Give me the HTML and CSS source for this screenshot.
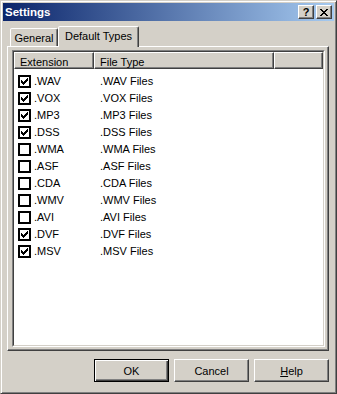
FILE: index.html
```html
<!DOCTYPE html>
<html lang="en">
<head>
  <meta charset="UTF-8">
  <title>Settings</title>
  <link rel="stylesheet" href="styles.css">
</head>
<body>
  <div class="window">
    <div class="titlebar">
      <span class="title">Settings</span>
      <div class="title-buttons">
        <button class="tbtn help-btn">?</button>
        <button class="tbtn">
          <svg width="8" height="7" viewBox="0 0 8 7" shape-rendering="crispEdges">
            <path d="M0 0h2v1H0z M6 0h2v1H6z M1 1h2v1H1z M5 1h2v1H5z M2 2h4v1H2z M3 3h2v1H3z M2 4h4v1H2z M1 5h2v1H1z M5 5h2v1H5z M0 6h2v1H0z M6 6h2v1H6z" fill="#000"/>
          </svg>
        </button>
      </div>
    </div>
    <div class="client">
      <div class="tabs">
        <div class="tab">General</div>
        <div class="tab active">Default Types</div>
      </div>
      <div class="panel">
        <div class="list">
          <div class="list-inner">
            <div class="header">
              <div class="col col-ext">Extension</div>
              <div class="col col-type">File Type</div>
              <div class="col col-rest"></div>
            </div>
            <div class="rows" id="rows"></div>
          </div>
        </div>
      </div>
      <div class="buttons">
        <button class="btn default">OK</button>
        <button class="btn">Cancel</button>
        <button class="btn"><u>H</u>elp</button>
      </div>
    </div>
  </div>

  <script>
    const types = [
      ["WAV", true], ["VOX", true], ["MP3", true], ["DSS", true],
      ["WMA", false], ["ASF", false], ["CDA", false], ["WMV", false],
      ["AVI", false], ["DVF", true], ["MSV", true]
    ];
    const check = '<svg width="7" height="7" viewBox="0 0 7 7" shape-rendering="crispEdges"><path d="M6 0h1v1H6z M5 1h2v1H5z M0 2h1v1H0z M4 2h3v1H4z M0 3h2v1H0z M3 3h3v1H3z M0 4h5v1H0z M1 5h3v1H1z M2 6h1v1H2z" fill="#000"/></svg>';
    const rowsEl = document.getElementById("rows");

    types.forEach(([ext, on]) => {
      rowsEl.innerHTML += `<div class="row">
        <div class="cell cell-ext"><span class="box">${on ? check : ""}</span>.${ext}</div>
        <div class="cell cell-type">.${ext} Files</div>
      </div>`;
    });
  </script>
</body>
</html>
```

FILE: styles.css
```css
* { box-sizing: border-box; }
body {
  margin: 0;
  background: #d4d0c8;
  font-family: "Liberation Sans", Arial, sans-serif;
  font-size: 11px;
  color: #000;
}
.window {
  width: 337px;
  height: 394px;
  background: #d4d0c8;
  border: 1px solid;
  border-color: #d4d0c8 #404040 #404040 #d4d0c8;
  box-shadow: inset 1px 1px #fff, inset -1px -1px #808080;
  padding: 2px;
}
.titlebar {
  height: 18px;
  display: flex;
  align-items: center;
  justify-content: space-between;
  padding: 0 2px 0 2px;
  background: linear-gradient(to right, #0a246a, #a6caf0);
  color: #fff;
  font-weight: bold;
}
.title { font-size: 11.5px; }
.title-buttons { display: flex; }
.tbtn {
  width: 16px;
  height: 14px;
  padding: 0;
  display: flex;
  align-items: center;
  justify-content: center;
  background: #d4d0c8;
  border: 1px solid;
  border-color: #fff #404040 #404040 #fff;
  box-shadow: inset -1px -1px #808080;
  font-family: inherit;
  font-weight: bold;
  font-size: 11px;
  color: #000;
}
.help-btn { margin-right: 2px; }
.client { padding: 5px 5px 0 4px; }
.tabs {
  display: flex;
  align-items: flex-end;
  height: 20px;
  padding-left: 3px;
}
.tab {
  width: 48px;
  height: 18px;
  padding-top: 2px;
  line-height: 14px;
  text-align: center;
  background: #d4d0c8;
  border: 1px solid;
  border-bottom: none;
  border-color: #fff #404040 transparent #fff;
  border-radius: 2px 2px 0 0;
  box-shadow: inset -1px 0 #808080;
}
.tab.active {
  width: 81px;
  height: 21px;
  margin-bottom: -1px;
  position: relative;
  z-index: 1;
}
.panel {
  height: 305px;
  border: 1px solid;
  border-color: #fff #404040 #404040 #fff;
  box-shadow: inset -1px -1px #808080;
  padding: 3px 3px 3px 4px;
}
.list {
  height: 100%;
  border: 1px solid;
  border-color: #808080 #fff #fff #808080;
}
.list-inner {
  height: 100%;
  border: 1px solid;
  border-color: #404040 #d4d0c8 #d4d0c8 #404040;
  background: #fff;
  overflow: hidden;
}
.header {
  display: flex;
  height: 17px;
}
.col {
  height: 17px;
  padding: 2px 0 0 5px;
  line-height: 14px;
  background: #d4d0c8;
  border: 1px solid;
  border-color: #fff #404040 #404040 #fff;
  box-shadow: inset -1px -1px #808080;
}
.col-ext { width: 80px; }
.col-type { width: 180px; }
.col-rest { flex: 1; }
.rows { padding-top: 4px; }
.row {
  display: flex;
  height: 17px;
  line-height: 17px;
}
.cell-ext {
  width: 80px;
  padding-left: 4px;
  display: flex;
  align-items: center;
}
.cell-type { padding-left: 6px; }
.box {
  width: 13px;
  height: 13px;
  margin-right: 3px;
  border: 2px solid #000;
  background: #fff;
  display: flex;
  align-items: center;
  justify-content: center;
}
.buttons {
  display: flex;
  justify-content: flex-end;
  gap: 5px;
  margin-top: 8px;
}
.btn {
  width: 75px;
  height: 23px;
  padding: 0;
  background: #d4d0c8;
  border: 1px solid;
  border-color: #fff #404040 #404040 #fff;
  box-shadow: inset -1px -1px #808080;
  font-family: inherit;
  font-size: 11px;
  color: #000;
}
.btn.default {
  border-color: #000;
  box-shadow: inset 1px 1px #fff, inset -1px -1px #404040, inset -2px -2px #808080;
}
```
